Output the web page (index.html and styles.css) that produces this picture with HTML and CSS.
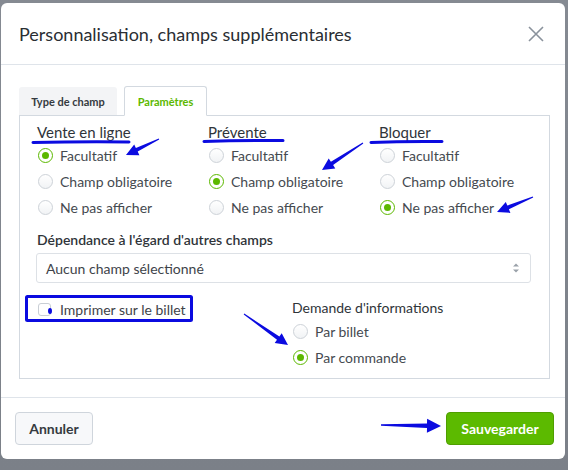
FILE: index.html
```html
<!DOCTYPE html>
<html lang="fr">
<head>
<meta charset="utf-8">
<title>Personnalisation</title>
<link rel="stylesheet" href="styles.css">
</head>
<body>
<div class="modal">
  <div class="modal-header">
    <h1 class="title">Personnalisation, champs supplémentaires</h1>
    <svg class="close" width="16" height="16" viewBox="0 0 16 16"><path d="M1 1L15 15M15 1L1 15" stroke="#8a929c" stroke-width="1.6" fill="none"/></svg>
  </div>
  <div class="modal-body">
    <div class="tabs">
      <div class="tab">Type de champ</div>
      <div class="tab active">Paramètres</div>
    </div>
    <div class="panel">
      <div class="cols">
        <div class="col">
          <div class="heading">Vente en ligne</div>
          <div class="radio-row"><span class="radio checked"></span>Facultatif</div>
          <div class="radio-row"><span class="radio"></span>Champ obligatoire</div>
          <div class="radio-row"><span class="radio"></span>Ne pas afficher</div>
        </div>
        <div class="col">
          <div class="heading">Prévente</div>
          <div class="radio-row"><span class="radio"></span>Facultatif</div>
          <div class="radio-row"><span class="radio checked"></span>Champ obligatoire</div>
          <div class="radio-row"><span class="radio"></span>Ne pas afficher</div>
        </div>
        <div class="col">
          <div class="heading">Bloquer</div>
          <div class="radio-row"><span class="radio"></span>Facultatif</div>
          <div class="radio-row"><span class="radio"></span>Champ obligatoire</div>
          <div class="radio-row"><span class="radio checked"></span>Ne pas afficher</div>
        </div>
      </div>
      <div class="dep-label">Dépendance à l'égard d'autres champs</div>
      <div class="select">
        <span>Aucun champ sélectionné</span>
        <svg width="8" height="12" viewBox="0 0 8 12"><path d="M1 4.5L4 1.5L7 4.5Z M1 7.5L4 10.5L7 7.5Z" fill="#9aa1a9"/></svg>
      </div>
      <div class="bottom">
        <div class="print">
          <div class="check-row"><span class="checkbox"><span class="dot"></span></span>Imprimer sur le billet</div>
        </div>
        <div class="info">
          <div class="heading sub">Demande d'informations</div>
          <div class="radio-row"><span class="radio"></span>Par billet</div>
          <div class="radio-row"><span class="radio checked"></span>Par commande</div>
        </div>
      </div>
    </div>
  </div>
  <div class="modal-footer">
    <button class="btn btn-cancel">Annuler</button>
    <button class="btn btn-save">Sauvegarder</button>
  </div>
</div>
<svg class="annotations" width="568" height="470" viewBox="0 0 568 470">
  <g stroke="#0b0be0" stroke-width="3" stroke-linecap="round" fill="none">
    <path d="M33 142.5 Q80 141.5 129 142"/>
    <path d="M204 141.5 Q240 140.5 283 140.5"/>
    <path d="M371 142.5 Q405 141 442 141.5"/>
    <rect x="26.5" y="296.5" width="165" height="24" rx="1" stroke-linecap="butt"/>
  </g>
  <g fill="#0b0be0">
    <polygon points="159.2,139.4 137.7,151.6 139.4,155.2 126,155 134.2,144.4 135.9,148.0 158.8,138.6"/>
    <polygon points="363.3,143.4 333.1,165.1 335.3,168.4 322,170 328.7,158.4 330.9,161.7 362.7,142.6"/>
    <polygon points="533.2,197.5 508.9,209.2 510.4,212.9 497,212 505.8,201.9 507.3,205.6 532.8,196.5"/>
    <polygon points="244.3,313.6 279.4,336.5 281.7,333.2 288,345 274.7,343.0 277.0,339.7 243.7,314.4"/>
    <polygon points="381,424.2 427,423.6 427.1,418.8 441,426 426.9,432.8 427,428.0 381,425.8"/>
  </g>
</svg>
</body>
</html>
```

FILE: styles.css
```css
* { box-sizing: border-box; }
html, body { margin: 0; padding: 0; }
body {
  width: 568px;
  height: 470px;
  overflow: hidden;
  background: linear-gradient(180deg, #858a92 0%, #7b8088 100%);
  font-family: "Lato", "Noto Sans", sans-serif;
  color: #3a3f45;
  position: relative;
}
.modal {
  margin: 3px 0 0 1px;
  width: 564px;
  height: 456px;
  background: #fff;
  border-radius: 6px;
  display: flex;
  flex-direction: column;
}
.modal-header {
  height: 62px;
  padding: 0 21px 0 18px;
  display: flex;
  align-items: center;
  justify-content: space-between;
  border-bottom: 1px solid #dfe4ea;
  flex: none;
}
.title {
  margin: 0;
  font-size: 18px;
  font-weight: 400;
  color: #2a2e33;
  letter-spacing: 0;
}
.close { display: block; margin-top: 1px; }
.modal-body {
  padding: 21px 14px 18px 18px;
  border-bottom: 1px solid #dfe4ea;
  flex: none;
}
.tabs {
  display: flex;
  align-items: flex-end;
  gap: 7px;
  height: 29px;
}
.tab {
  width: 98px;
  height: 28px;
  background: #f3f4f6;
  font-size: 11px;
  font-weight: 700;
  color: #353a40;
  display: flex;
  align-items: center;
  justify-content: center;
  border-radius: 3px 3px 0 0;
}
.tab.active {
  width: 83px;
  height: 30px;
  margin-bottom: -1px;
  background: #fff;
  border: 1px solid #d3d9e0;
  border-bottom-color: #fff;
  color: #5cb800;
  position: relative;
  z-index: 1;
}
.panel {
  width: 531px;
  height: 264px;
  border: 1px solid #d3d9e0;
  padding: 6px 17px 8px 17px;
}
.cols {
  display: grid;
  grid-template-columns: 171px 171px 171px;
}
.heading {
  height: 20px;
  line-height: 20px;
  font-size: 15px;
  color: #2f3439;
}
.radio-row {
  height: 26px;
  display: flex;
  align-items: center;
  font-size: 14px;
  color: #454a50;
  padding-left: 1px;
}
.radio {
  width: 15px;
  height: 15px;
  border-radius: 50%;
  border: 1px solid #cdd2d8;
  background: linear-gradient(180deg, #fff 0%, #f1f3f5 100%);
  margin-right: 7px;
  flex: none;
  display: flex;
  align-items: center;
  justify-content: center;
}
.radio.checked {
  border: 1.5px solid #5cb800;
  background: #fff;
}
.radio.checked::after {
  content: "";
  width: 7px;
  height: 7px;
  border-radius: 50%;
  background: #5cb800;
}
.dep-label {
  margin-top: 10px;
  height: 20px;
  line-height: 20px;
  font-size: 14px;
  font-weight: 600;
  color: #2f3439;
}
.select {
  margin-top: 3px;
  margin-left: -1px;
  width: 495px;
  height: 30px;
  border: 1px solid #dde1e6;
  border-radius: 3px;
  display: flex;
  align-items: center;
  justify-content: space-between;
  padding: 0 10px 0 9px;
  font-size: 14px;
  color: #3e4349;
}
.select svg { display: block; }
.bottom {
  margin-top: 15px;
  display: grid;
  grid-template-columns: 255px 1fr;
}
.check-row {
  height: 22px;
  margin-top: 0;
  display: flex;
  align-items: center;
  font-size: 14px;
  color: #3e4349;
  padding-left: 1px;
}
.checkbox {
  width: 13px;
  height: 13px;
  border: 1px solid #c9ced5;
  border-radius: 3px;
  margin-right: 9px;
  position: relative;
  flex: none;
}
.checkbox .dot {
  position: absolute;
  right: -2px;
  top: 4px;
  width: 4px;
  height: 6px;
  border-radius: 50%;
  background: #0b0be0;
}
.heading.sub { font-size: 14px; }
.info .radio-row { padding-left: 1px; }
.modal-footer {
  flex: 1;
  display: flex;
  justify-content: space-between;
  padding: 14px 11px 0 14px;
}
.btn {
  height: 33px;
  border-radius: 4px;
  font-family: "Lato", "Noto Sans", sans-serif;
  font-size: 14px;
  font-weight: 700;
  padding: 0;
  cursor: pointer;
}
.btn-cancel {
  width: 78px;
  background: #f7f8fa;
  border: 1px solid #cfd5dc;
  color: #353a40;
}
.btn-save {
  width: 108px;
  background: #5cba00;
  border: 1px solid #4f9e00;
  color: #fff;
}
.annotations {
  position: absolute;
  left: 0;
  top: 0;
  pointer-events: none;
}
```
